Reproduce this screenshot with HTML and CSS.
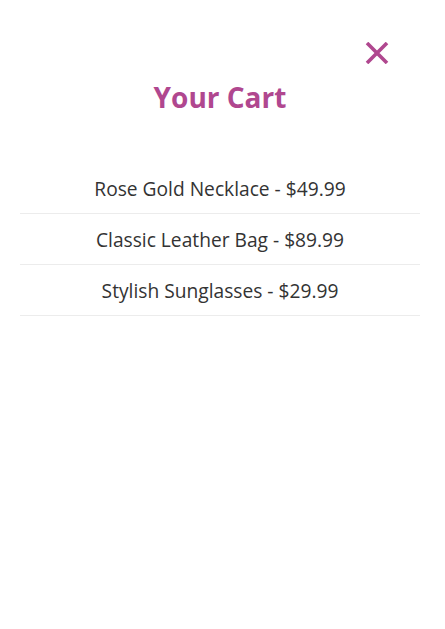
FILE: index.html
```html
<!DOCTYPE html>
<html>
<head>
<meta charset="utf-8">
<link rel="stylesheet" href="styles.css">
</head>
<body>
<div class="cart">
  <div class="cart-top">
    <button class="close" aria-label="Close">
      <svg width="24" height="22" viewBox="0 0 24 22"><path d="M2 1 L22 21 M22 1 L2 21" stroke="#b0478f" stroke-width="3.6" fill="none"/></svg>
    </button>
  </div>
  <h2 class="title">Your Cart</h2>
  <ul class="items">
    <li class="item">Rose Gold Necklace - $49.99</li>
    <li class="item">Classic Leather Bag - $89.99</li>
    <li class="item">Stylish Sunglasses - $29.99</li>
  </ul>
</div>
</body>
</html>
```
FILE: styles.css
```css
html, body {
  margin: 0;
  padding: 0;
  background: #fff;
}
body {
  font-family: "Open Sans", "Noto Sans", sans-serif;
  color: #333;
}
.cart {
  width: 400px;
  padding: 42px 20px 20px;
}
.cart-top {
  display: flex;
  justify-content: flex-end;
  padding-right: 31px;
}
.close {
  border: 0;
  background: none;
  padding: 0;
  margin: 0;
  width: 24px;
  height: 22px;
  display: block;
}
.close svg { display: block; }
.title {
  margin: 14px 0 0;
  text-align: center;
  color: #b0478f;
  font-size: 28px;
  font-weight: 700;
  line-height: 38px;
}
.items {
  list-style: none;
  margin: 47px 0 0;
  padding: 0;
}
.item {
  text-align: center;
  font-size: 19.2px;
  line-height: 26px;
  padding: 13px 0 11px;
  border-bottom: 1px solid #ececec;
}
```
